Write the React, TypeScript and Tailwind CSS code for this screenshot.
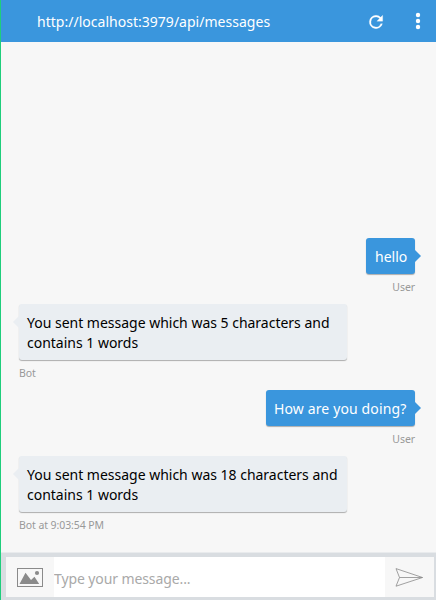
import React from "react";

type Message = { from: "user" | "bot"; lines: string[]; label: string; size: string; text: string };

const messages: Message[] = [
  { from: "user", lines: ["hello"], label: "User", size: "w-[49px] h-9 mb-[30px]", text: "pl-[9px] tracking-normal" },
  { from: "bot", lines: ["You sent message which was 5 characters and", "contains 1 words"], label: "Bot", size: "w-[328px] h-14 mb-[30px]", text: "pl-2 tracking-[-0.01px]" },
  { from: "user", lines: ["How are you doing?"], label: "User", size: "w-[149px] h-9 mb-[30px]", text: "pl-2 tracking-[0.13px]" },
  { from: "bot", lines: ["You sent message which was 18 characters and", "contains 1 words"], label: "Bot at 9:03:54 PM", size: "w-[328px] h-14 mb-[41px]", text: "pl-2 tracking-[-0.01px]" },
];

function Bubble({ message }: { message: Message }) {
  const user = message.from === "user";
  return (
    <div
      className={`relative shrink-0 rounded-[3px] pt-[8.5px] pr-2 text-[14px] leading-5 whitespace-nowrap shadow-[0_1px_1px_rgba(0,0,0,0.3)] ${message.size} ${message.text} ${
        user ? "self-end bg-[#3a96dd] text-white" : "self-start bg-[#eaeef2] text-black"
      }`}
    >
      {message.lines.map((line) => (
        <div key={line}><span>{line}</span></div>
      ))}
      <svg
        className={`absolute top-3 h-3 w-1.5 ${user ? "left-full fill-[#3a96dd]" : "right-full fill-[#eaeef2]"}`}
        viewBox="0 0 6 12"
      >
        <path d={user ? "M0 0 6 6 0 12Z" : "M6 0 0 6 6 12Z"} />
      </svg>
      <span
        className={`absolute top-full mt-[5px] text-[10.5px] leading-4 tracking-[-0.08px] text-[#999] ${user ? "right-0" : "left-0"}`}
      >
        {message.label}
      </span>
    </div>
  );
}

export default function App() {
  return (
    <div className="flex h-[600px] w-[436px] flex-col overflow-hidden border-l border-[#1fce7c] bg-[#f7f7f7] font-['Noto_Sans',sans-serif]">
      <header className="flex h-[42px] shrink-0 items-center bg-[#3a96dd] pl-9 text-white">
        <span className="flex-1 pt-px text-[14px] leading-5 tracking-[0.02px]"><span>http://localhost:3979/api/messages</span></span>
        <svg className="mt-px mr-[30.5px] size-5 fill-white stroke-white" strokeWidth=".3" viewBox="0 0 24 24">
          <path d="M17.65 6.35A7.96 7.96 0 0 0 12 4a8 8 0 1 0 7.73 10h-2.08A6 6 0 1 1 12 6c1.66 0 3.14.69 4.22 1.78L13 11h7V4z" />
        </svg>
        <svg className="mr-4 h-[18px] w-1 overflow-visible fill-white" viewBox="0 0 4 18">
          <circle cx="2" cy="3" r="2.2" />
          <circle cx="2" cy="9" r="2.2" />
          <circle cx="2" cy="15" r="2.2" />
        </svg>
      </header>
      <main className="flex min-h-0 flex-1 flex-col justify-end pr-[21px] pl-[18px]">
        {messages.map((message, index) => (
          <Bubble key={index} message={message} />
        ))}
      </main>
      <footer className="flex h-[47px] shrink-0 border-t-4 border-r-2 border-b-3 border-l-5 border-[#d9dde1] shadow-[0_-1px_#e9ebed]">
        <div className="flex w-12 items-center pl-[11px]">
          <svg className="h-[19px] w-[26px]" viewBox="0 0 26 19">
            <rect x=".5" y=".5" width="25" height="18" fill="none" stroke="#8a8a8a" />
            <path d="M2.5 16 8.5 4.8 14 12l3.5-3.2 4.7 7.2Z" fill="#8a8a8a" />
            <circle cx="20" cy="5" r="2.1" fill="#8a8a8a" />
          </svg>
        </div>
        <input
          className="min-w-0 flex-1 bg-white p-0 pt-0.5 text-[14px] tracking-[-0.1px] outline-none placeholder:text-[#a9a9a9]"
          placeholder="Type your message..."
        />
        <div className="flex w-[49px] items-center pl-2.5">
          <svg className="h-[19px] w-7" viewBox="0 0 28 19" fill="none" stroke="#8a8a8a" strokeWidth=".8">
            <path d="M1 .6 27.5 9.5 1 18.2 4.5 9.5ZM4.5 9.5h23" />
          </svg>
        </div>
      </footer>
    </div>
  );
}
